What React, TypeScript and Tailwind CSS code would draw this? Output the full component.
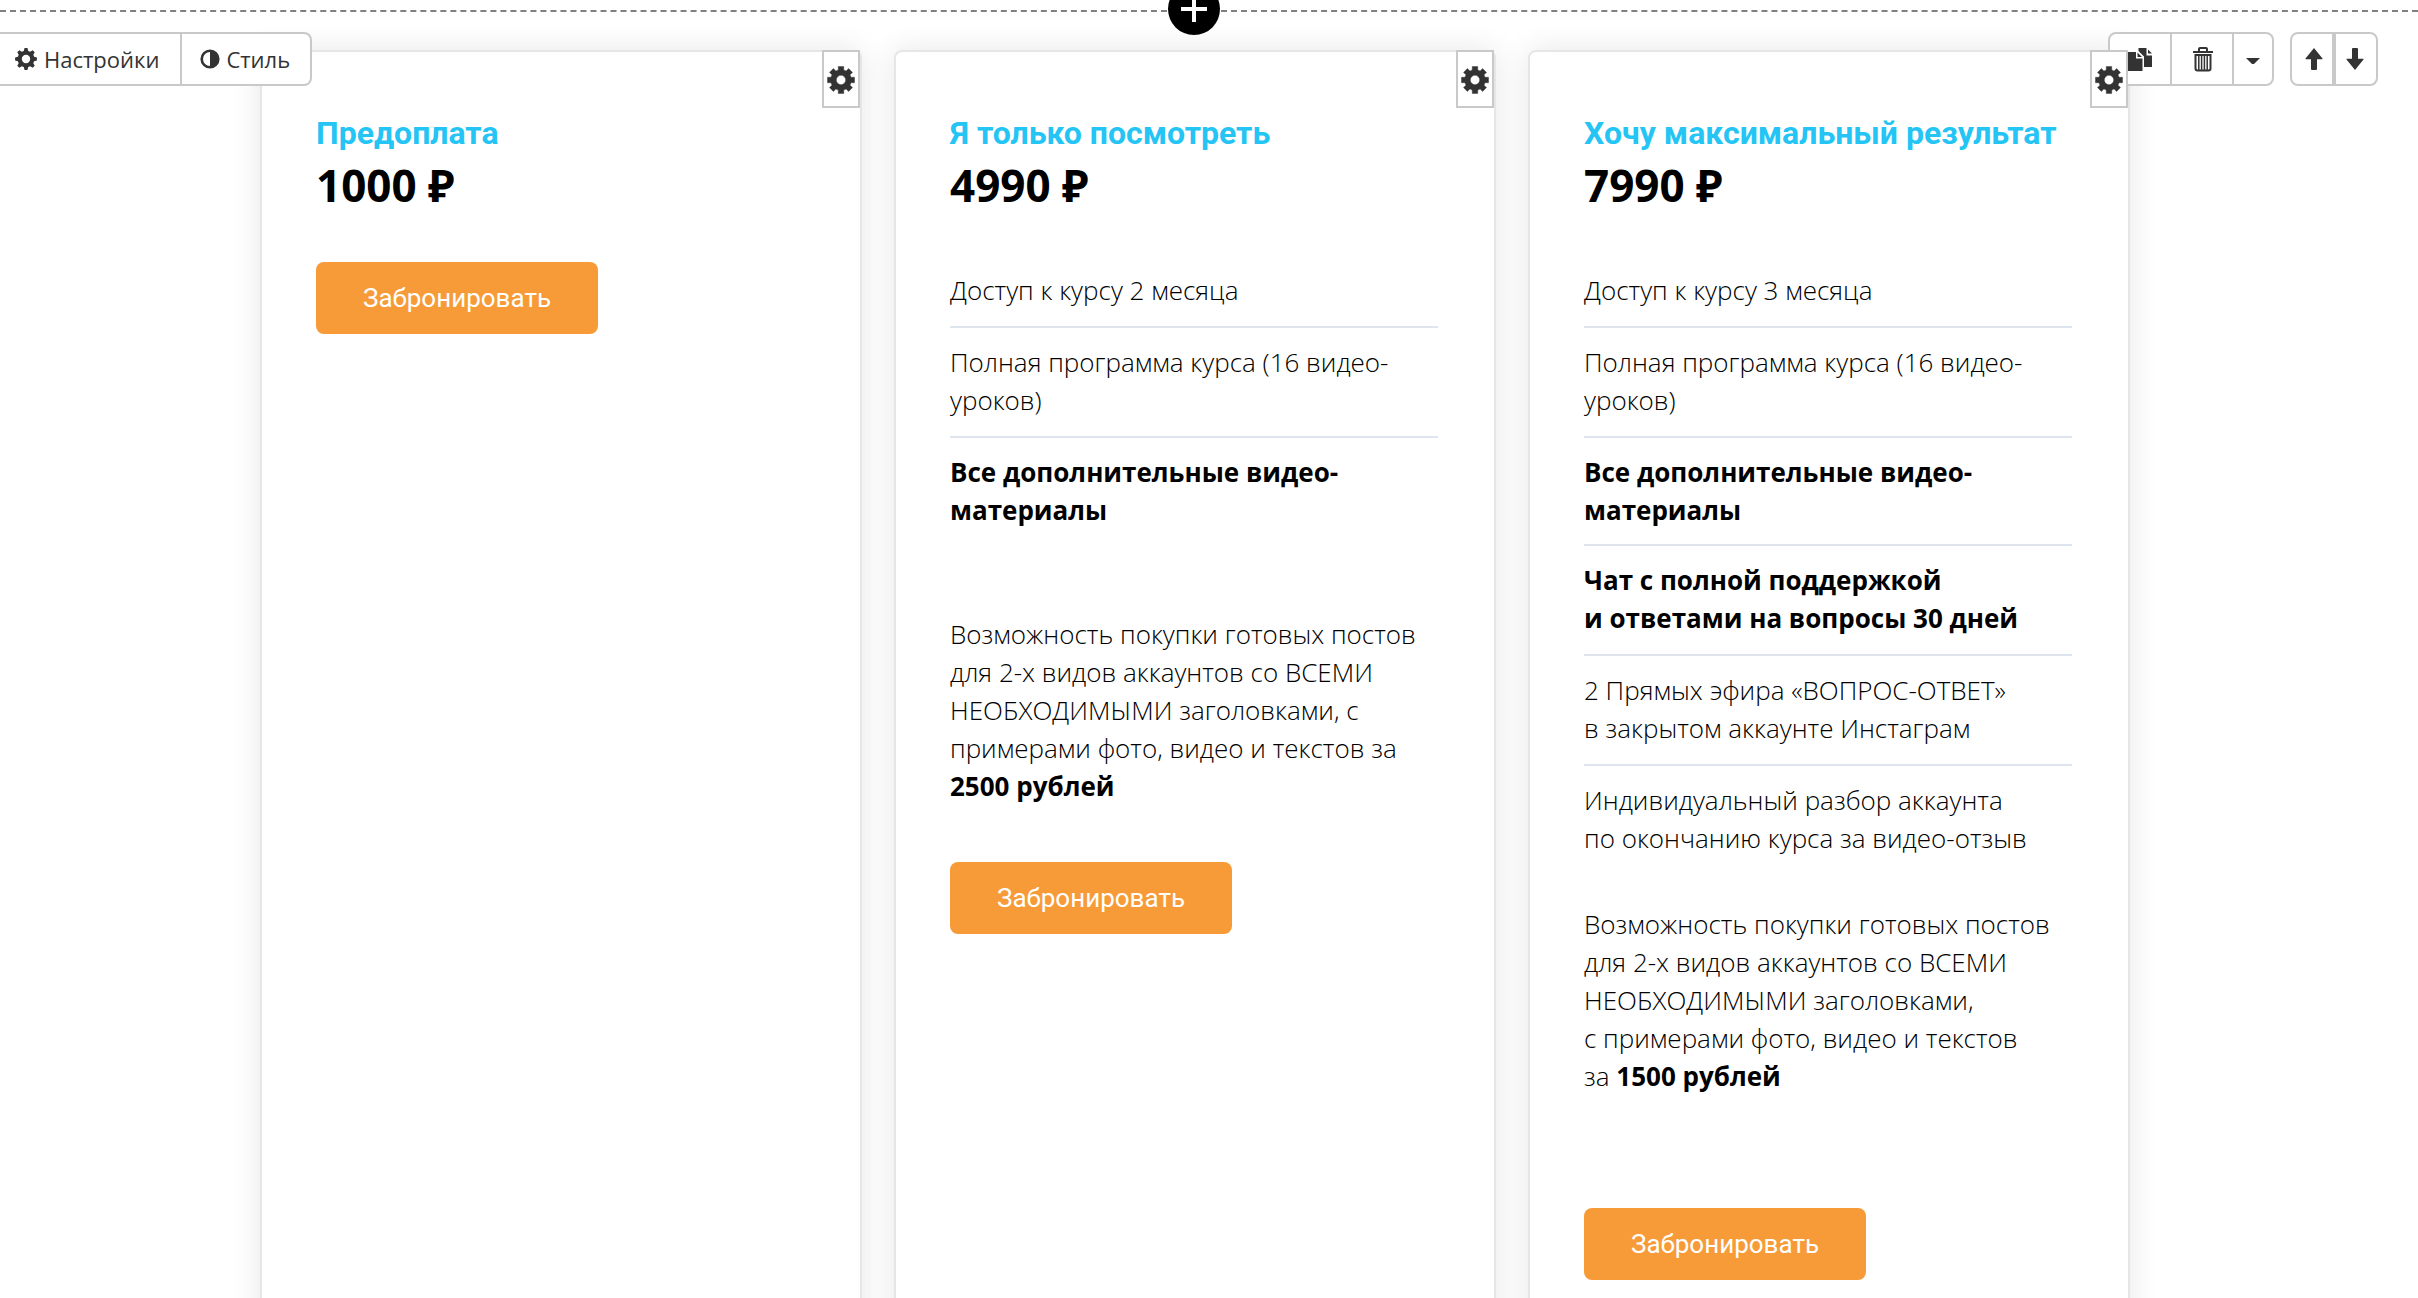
import type { ReactNode, SVGProps } from "react";

function toothedRing(teeth: number, outer: number, root: number, tip: number, base: number) {
  const points: string[] = [];
  for (let i = 0; i < teeth; i++) {
    const mid = (i * 2 * Math.PI) / teeth - Math.PI / 2;
    const corners: [number, number][] = [
      [root, mid - base],
      [outer, mid - tip],
      [outer, mid + tip],
      [root, mid + base],
    ];
    for (const [r, a] of corners) {
      points.push(`${(r * Math.cos(a)).toFixed(2)} ${(r * Math.sin(a)).toFixed(2)}`);
    }
  }
  return `M${points.join("L")}Z`;
}

const hole = (r: number) => `M${r} 0A${r} ${r} 0 1 0 ${-r} 0A${r} ${r} 0 1 0 ${r} 0Z`;

const COG = toothedRing(8, 11, 8.4, 0.13, 0.27) + hole(4.2);
const GEAR = toothedRing(8, 13.8, 10.4, 0.2, 0.27) + hole(4.7);

type IconProps = SVGProps<SVGSVGElement>;

const CogIcon = (p: IconProps) => (
  <svg viewBox="-11 -11 22 22" width="22" height="22" fill="currentColor" aria-hidden="true" {...p}>
    <path fillRule="evenodd" d={COG} />
  </svg>
);

const GearIcon = (p: IconProps) => (
  <svg viewBox="-14 -14 28 28" width="28" height="28" fill="currentColor" aria-hidden="true" {...p}>
    <path fillRule="evenodd" stroke="currentColor" strokeWidth="0.4" strokeLinejoin="round" d={GEAR} />
  </svg>
);

const ContrastIcon = (p: IconProps) => (
  <svg viewBox="0 0 20 20" width="20" height="20" fill="currentColor" aria-hidden="true" {...p}>
    <path fillRule="evenodd" d="M10 0.4a9.6 9.6 0 1 1 0 19.2a9.6 9.6 0 0 1 0-19.2ZM10 3a7 7 0 0 0 0 14Z" />
  </svg>
);

const CopyIcon = (p: IconProps) => (
  <svg viewBox="0 0 26 24" width="26" height="24" fill="currentColor" aria-hidden="true" {...p}>
    <path d="M0 5h9v6.500h6.500v12.500H0ZM10.500 5.500l4.500 4.500h-4.500ZM11.500 1h8v7.500h5.500v11.500h-8v-10.500l-5.500-5.500ZM21 2.500l4 4h-4Z" />
  </svg>
);

const TrashIcon = (p: IconProps) => (
  <svg viewBox="0 0 22 26" width="22" height="26" fill="none" stroke="currentColor" aria-hidden="true" {...p}>
    <path strokeWidth="2" d="M1 6h20M7 5.500V3q0-1 1-1h6q1 0 1 1v2.500" />
    <path strokeWidth="2" d="M3.500 9h15v13.500q0 2-2 2h-11q-2 0-2-2Z" />
    <path strokeWidth="1.500" d="M6.800 9v15M9.600 9v15M12.400 9v15M15.200 9v15" />
  </svg>
);

const CaretIcon = (p: IconProps) => (
  <svg viewBox="0 0 14 7" width="14" height="7" fill="currentColor" aria-hidden="true" {...p}>
    <path d="M0 0h14L8.500 5.500q-1.500 1.200-3 0Z" />
  </svg>
);

const ArrowIcon = (p: IconProps) => (
  <svg viewBox="0 0 18 22" width="18" height="22" fill="currentColor" aria-hidden="true" {...p}>
    <path d="M9 0l8.500 10.500q.3.800-.5.800H12V21q0 1-1 1H7q-1 0-1-1V11.300H1q-.8 0-.5-.8Z" />
  </svg>
);

const BUTTON = "flex items-center justify-center border-[#c9c9c9] bg-white text-[#333]";

type Item = { text: ReactNode; strong?: boolean; tight?: boolean };

type Plan = {
  title: string;
  price: string;
  items?: Item[];
  note?: ReactNode;
  noteGap?: string;
  buttonGap: string;
};

const plans: Plan[] = [
  { title: "Предоплата", price: "1000 ₽", buttonGap: "mt-[47px]" },
  {
    title: "Я только посмотреть",
    price: "4990 ₽",
    items: [
      { text: "Доступ к курсу 2 месяца" },
      { text: "Полная программа курса (16 видео-уроков)" },
      { text: "Все дополнительные видео-материалы", strong: true },
    ],
    note: (
      <>
        Возможность покупки готовых постов для 2-х видов аккаунтов со ВСЕМИ НЕОБХОДИМЫМИ заголовками, с
        примерами фото, видео и текстов за <strong className="font-bold">2500 рублей</strong>
      </>
    ),
    noteGap: "mt-[86px]",
    buttonGap: "mt-[57px]",
  },
  {
    title: "Хочу максимальный результат",
    price: "7990 ₽",
    items: [
      { text: "Доступ к курсу 3 месяца" },
      { text: "Полная программа курса (16 видео-уроков)" },
      { text: "Все дополнительные видео-материалы", strong: true, tight: true },
      { text: <>Чат с полной поддержкой<br />и ответами на вопросы 30 дней</>, strong: true },
      { text: <>2 Прямых эфира «ВОПРОС-ОТВЕТ»<br />в закрытом аккаунте Инстаграм</> },
      { text: <>Индивидуальный разбор аккаунта<br />по окончанию курса за видео-отзыв</> },
    ],
    note: (
      <>
        Возможность покупки готовых постов для 2-х видов аккаунтов со ВСЕМИ НЕОБХОДИМЫМИ заголовками,
        с&nbsp;примерами фото, видео и текстов за&nbsp;<strong className="font-bold">1500 рублей</strong>
      </>
    ),
    noteGap: "mt-12",
    buttonGap: "mt-[113px]",
  },
];

function PlanCard({ plan }: { plan: Plan }) {
  return (
    <article className="relative min-w-0 flex-1 rounded-lg border-2 border-[#e6e6e6] bg-white pt-[60px] pr-14 pb-14 pl-[54px] shadow-[0_0_30px_rgba(0,0,0,0.1)]">
      <button
        type="button"
        aria-label={`Настроить: ${plan.title}`}
        className={`${BUTTON} absolute -top-0.5 right-0 z-20 h-[58px] w-[38px] border-2 pt-0.5`}
      >
        <GearIcon className="shrink-0" />
      </button>
      <h2 className="font-['Roboto',sans-serif] text-[32px] leading-[43px] font-bold whitespace-nowrap text-[#24c4f4]">
        {plan.title}
      </h2>
      <p className="text-[44px] leading-[60px] font-bold">{plan.price}</p>
      {plan.items && (
        <ul className="mt-[41px] divide-y-2 divide-[#dfe5ee]">
          {plan.items.map((item, i) => (
            <li
              key={i}
              className={`pt-[15px] last:pb-0 ${item.tight ? "pb-[15px]" : "pb-[17px]"} ${item.strong ? "font-bold" : ""}`}
            >
              {item.text}
            </li>
          ))}
        </ul>
      )}
      {plan.note && <p className={plan.noteGap}>{plan.note}</p>}
      <button
        type="button"
        className={`${plan.buttonGap} block h-[72px] rounded-lg bg-[#f79b38] px-[47px] font-['Roboto',sans-serif] text-[26px] font-normal text-white`}
      >
        Забронировать
      </button>
    </article>
  );
}

export default function App() {
  return (
    <div className="relative h-screen overflow-hidden bg-white font-['Open_Sans','Noto_Sans',sans-serif] text-[26px] leading-[38px] font-light text-black">
      <div className="absolute inset-x-0 top-2.5 border-t-2 border-dashed border-[#808080]" />

      <main className="flex h-full justify-center pt-[50px] pr-7">
        <div className="flex h-[1500px] w-full max-w-[1870px] gap-8">
          {plans.map((plan) => (
            <PlanCard key={plan.title} plan={plan} />
          ))}
        </div>
      </main>

      <div className="absolute inset-x-0 -top-[17px] flex justify-center pr-[30px]">
        <button type="button" aria-label="Добавить блок" className="flex size-[52px] items-center justify-center rounded-full bg-black text-white">
          <svg viewBox="0 0 26 26" width="26" height="26" fill="none" stroke="currentColor" strokeWidth="4" aria-hidden="true">
            <path d="M13 0v26M0 13h26" />
          </svg>
        </button>
      </div>

      <div className="absolute top-8 -left-0.5 z-10 flex text-[22px] font-normal">
        <button type="button" className={`${BUTTON} h-[54px] gap-[7px] border-2 pr-[21px] pl-[15px]`}>
          <CogIcon />
          Настройки
        </button>
        <button type="button" className={`${BUTTON} h-[54px] gap-1.5 rounded-r-lg border-2 border-l-0 pr-5 pl-[18px]`}>
          <ContrastIcon />
          Стиль
        </button>
      </div>

      <div className="absolute top-8 right-10 z-10 flex gap-4">
        <div className="flex">
          <button type="button" aria-label="Копировать" className={`${BUTTON} h-[54px] w-16 rounded-l-lg border-2`}>
            <CopyIcon />
          </button>
          <button type="button" aria-label="Удалить" className={`${BUTTON} h-[54px] w-[62px] border-y-2 border-r-2 pl-0.5`}>
            <TrashIcon />
          </button>
          <button type="button" aria-label="Ещё" className={`${BUTTON} h-[54px] w-10 rounded-r-lg border-y-2 border-r-2 pt-1`}>
            <CaretIcon />
          </button>
        </div>
        <div className="flex">
          <button type="button" aria-label="Выше" className={`${BUTTON} h-[54px] w-11 rounded-l-lg border-2 pl-1`}>
            <ArrowIcon />
          </button>
          <button type="button" aria-label="Ниже" className={`${BUTTON} h-[54px] w-11 rounded-r-lg border-2 pr-0.5`}>
            <ArrowIcon className="rotate-180" />
          </button>
        </div>
      </div>
    </div>
  );
}
